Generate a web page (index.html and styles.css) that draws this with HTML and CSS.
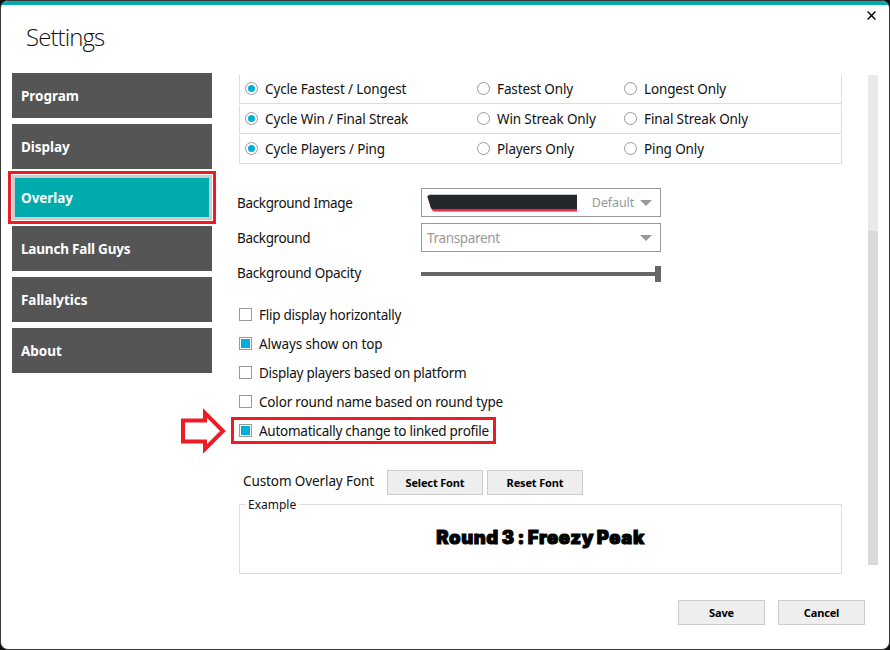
FILE: index.html
```
<!DOCTYPE html>
<html lang="en">
<head>
<meta charset="utf-8">
<title>Settings</title>
<link rel="stylesheet" href="styles.css">
</head>
<body>
<div class="window">
  <header class="titlebar">
    <h1>Settings</h1>
    <svg class="close" width="9" height="9" viewBox="0 0 9 9"><path d="M.6.6l7.8 7.8M8.4.6L.6 8.4"/></svg>
  </header>
  <main class="body">
    <nav class="sidebar">
      <a class="tab">Program</a>
      <a class="tab">Display</a>
      <a class="tab active">Overlay</a>
      <a class="tab long">Launch Fall Guys</a>
      <a class="tab">Fallalytics</a>
      <a class="tab">About</a>
    </nav>
    <section class="content">
      <div class="cycles">
        <div class="cycle"><label><i class="radio on"></i>Cycle Fastest / Longest</label><label><i class="radio"></i>Fastest Only</label><label><i class="radio"></i>Longest Only</label></div>
        <div class="cycle"><label><i class="radio on"></i>Cycle Win / Final Streak</label><label><i class="radio"></i>Win Streak Only</label><label><i class="radio"></i>Final Streak Only</label></div>
        <div class="cycle"><label><i class="radio on"></i>Cycle Players / Ping</label><label><i class="radio"></i>Players Only</label><label><i class="radio"></i>Ping Only</label></div>
      </div>
      <div class="fields">
        <div class="field"><span class="name">Background Image</span>
          <div class="select image">
            <svg class="swatch" width="150" height="18" viewBox="0 0 150 18"><path fill="#ff1f4b" d="M3 12h147v5.500H8Q5.500 17.500 4.500 15z"/><path fill="#24282b" d="M3 1h147v14H5.500Q4 15 3.300 12L.4 3Q0 1 3 1z"/><path fill="#a9b4b4" d="M2 .3h148v.8H2z"/></svg>
            <span>Default</span><i class="caret"></i>
          </div>
        </div>
        <div class="field"><span class="name">Background</span>
          <div class="select"><span>Transparent</span><i class="caret"></i></div>
        </div>
        <div class="field"><span class="name opacity">Background Opacity</span>
          <div class="slider"><i class="track"></i><i class="thumb"></i></div>
        </div>
      </div>
      <div class="checks">
        <label class="tight"><i class="box"></i>Flip display horizontally</label>
        <label class="loose"><i class="box on"></i>Always show on top</label>
        <label class="tight"><i class="box"></i>Display players based on platform</label>
        <label class="medium"><i class="box"></i>Color round name based on round type</label>
        <label class="tight marked"><i class="box on"></i>Automatically change to linked profile
          <svg class="arrow" width="46" height="46" viewBox="0 0 46 46"><path d="M2 12.500H24V5L42 23 24 41V33.500H2z"/></svg>
        </label>
      </div>
      <div class="fontrow"><span class="name">Custom Overlay Font</span><button>Select Font</button><button>Reset Font</button></div>
      <div class="example"><span class="legend">Example</span><p>Round 3 : Freezy Peak</p></div>
    </section>
    <div class="scrollbar"><i></i></div>
  </main>
  <footer><button>Save</button><button>Cancel</button></footer>
</div>
</body>
</html>
```
FILE: styles.css
```
*, *::before, *::after { box-sizing: border-box; }
body { margin: 0; background: #111; font: 13.500px/20px "Noto Sans", "Open Sans", sans-serif; color: #111; }
i { font-style: normal; }
.window { width: 890px; height: 650px; background: #fff; border: 1px solid #3a3a3a; border-radius: 8px; overflow: hidden; display: flex; flex-direction: column; }
.titlebar { height: 72px; border-top: 4px solid #00abae; display: flex; justify-content: space-between; padding: 6px 13px 0 25px; flex: none; }
h1 { margin: 9px 0 0; font: 300 24px/34px "Open Sans", sans-serif; color: #111; letter-spacing: -.9px; }
.close { stroke: #000; stroke-width: 1.4; fill: none; }
.body { display: flex; height: 501px; padding-left: 11px; }
.sidebar { width: 200px; display: flex; flex-direction: column; gap: 6px; }
.tab { height: 45px; padding: 2px 9px 0; line-height: 43px; background: #555; color: #fff; font-weight: 700; font-size: 13.500px; letter-spacing: -.05px; }
.long { letter-spacing: -.2px; }
.active { position: relative; background: #00abae; border: 3px solid #ccc; padding: 1px 6px 0; line-height: 39px; outline: 3px solid #ed1c24; outline-offset: 1px; }
.content { margin: 2px 0 0 27px; width: 603px; }
.cycles { display: grid; row-gap: 1px; }
.cycle { height: 29px; border: solid #dcdcdc; border-width: 0 1px 1px; padding-left: 5px; display: grid; grid-template-columns: 232px 147px 1fr; align-items: center; letter-spacing: -.13px; }
.cycle label { display: flex; align-items: center; gap: 7px; white-space: nowrap; }
.radio { width: 13px; height: 13px; border: 1px solid #999; border-radius: 50%; display: grid; place-items: center; position: relative; top: -1px; }
.radio.on::after { content: ""; width: 7px; height: 7px; border-radius: 50%; background: #00aedb; }
.fields { margin: 24px 0 0 -2px; display: grid; gap: 6px; }
.field { height: 29px; display: flex; align-items: center; letter-spacing: -.35px; }
.field .name { width: 184px; padding-top: 1px; }
.field .opacity { letter-spacing: -.24px; }
.select { width: 240px; height: 29px; border: 1px solid #999; display: flex; align-items: center; justify-content: space-between; padding: 0 8px 0 5px; color: #999; }
.image span { font-size: 12.500px; margin-left: 8px; letter-spacing: -.1px; }
.swatch { margin-right: 1px; }
.caret { border: solid transparent; border-width: 6px 6px 0; border-top-color: #999; }
.slider { width: 240px; height: 16px; display: flex; align-items: center; position: relative; top: 1px; }
.track { flex: 1; height: 4px; background: #666; }
.thumb { width: 6px; height: 16px; background: #666; }
.checks { margin-top: 13px; display: grid; }
.checks label { height: 29px; display: flex; align-items: center; gap: 7px; white-space: nowrap; }
.tight { letter-spacing: -.26px; }
.medium { letter-spacing: -.18px; }
.loose { letter-spacing: -.1px; }
.box { width: 13px; height: 13px; border: 1px solid #999; padding: 1px; }
.box.on::after { content: ""; display: block; height: 9px; background: #00aedb; }
.marked { position: relative; }
.marked::before { content: ""; position: absolute; left: -8px; top: 1px; width: 265px; height: 27px; border: 3px solid #ed1c24; }
.arrow { position: absolute; left: -58px; top: -8px; fill: #fff; stroke: #ed1c24; stroke-width: 4; }
.fontrow { display: flex; gap: 4px; margin-top: 25px; height: 25px; }
.fontrow .name { width: 140px; margin-left: 4px; line-height: 22px; letter-spacing: -.1px; }
button { width: 96px; height: 25px; padding: 0; border: 1px solid #ccc; background: #eee; font: 700 11px/23px "Noto Sans", "Open Sans", sans-serif; color: #000; letter-spacing: -.15px; }
.example { position: relative; height: 70px; margin-top: 9px; border: 1px solid #dcdcdc; display: flex; justify-content: center; }
.legend { position: absolute; left: 6px; top: -9px; height: 18px; padding: 0 3px 0 2px; background: #fff; font-size: 12px; line-height: 18px; }
.example p { margin: 20px 0 0; font: 900 18.500px/24px Inter, "Open Sans", sans-serif; color: #000; -webkit-text-stroke: 1px #000; letter-spacing: .6px; word-spacing: -1.500px; white-space: nowrap; }
.scrollbar { width: 10px; height: 490px; margin: 2px 0 0 26px; background: #e9e9e9; padding-top: 156px; }
.scrollbar i { display: block; height: 334px; background: #dadada; }
footer { display: flex; justify-content: flex-end; gap: 13px; padding: 26px 24px 0 0; }
footer button { width: 87px; }
```
